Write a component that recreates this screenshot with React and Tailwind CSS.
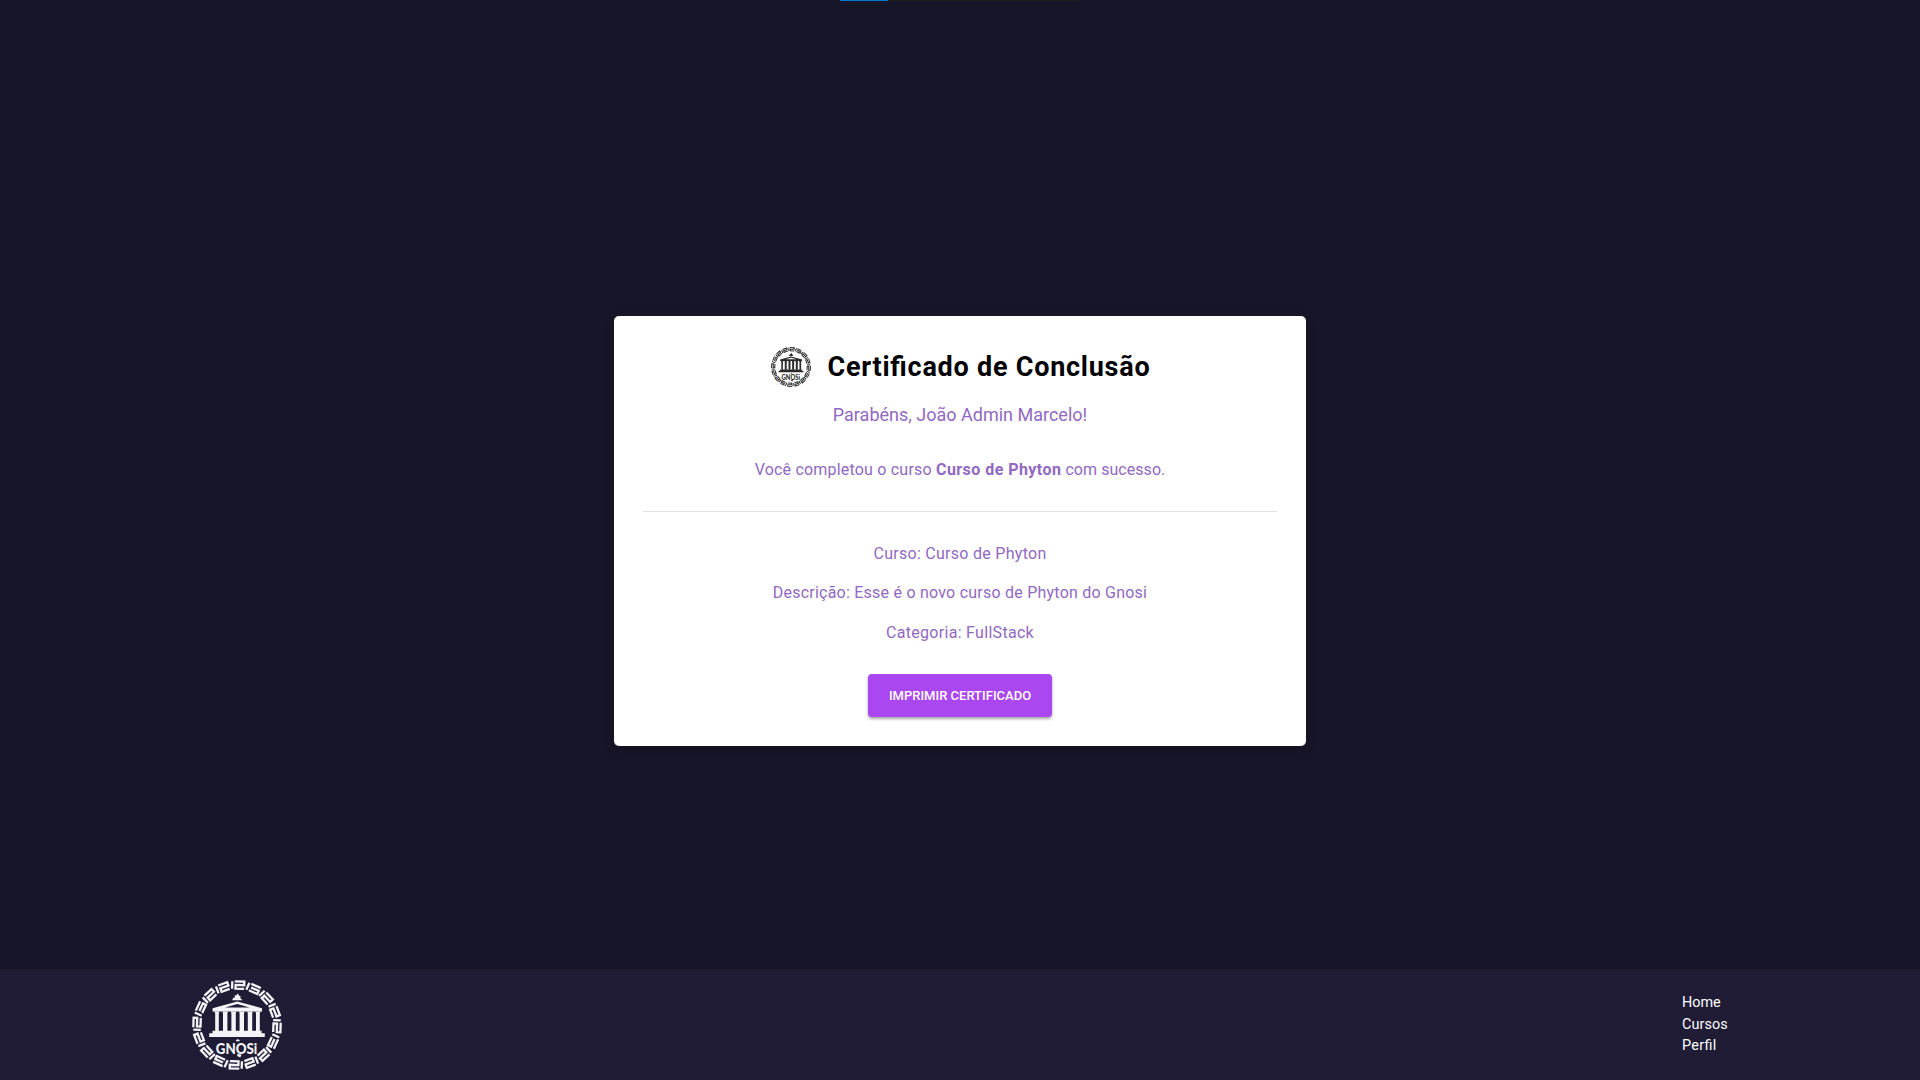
const MEANDERS = Array.from({ length: 16 }, (_, i) => i * 22.5 + 2);

function GnosiLogo({ className }) {
  return (
    <svg viewBox="0 0 90 90" className={className} role="img" aria-label="Gnosi">
      <g fill="none" stroke="currentColor" strokeWidth="2.3">
        {MEANDERS.map((angle, i) => (
          <path
            key={angle}
            transform={`rotate(${angle} 45 45)`}
            d={
              i % 4 === 1
                ? "M38.8 9V1.4M41 1.6H51.4M42.2 5H50.6V8.4H41.4"
                : "M38.8 9V1.4M41.2 1.4H50.8V5H42.2V8.6H50.8"
            }
          />
        ))}
      </g>
      <g fill="currentColor">
        <path d="M40 20.2L41.6 17.4L43.2 17.6L42.6 15L44.4 15.6L45.6 13.2L47.2 15.8L48.8 16.4L48.2 18L50.6 20.2Z" />
        <path
          fillRule="evenodd"
          d="M45.3 21.6L70 28.2V31.6H20.6V28.2ZM45.3 24L33 27.6H57.6Z"
        />
        <path d="M22.2 31.5h5.2l-.6 2v17.5h-3.6V33.5ZM30.4 31.5h5.6l-.6 2v17.5h-4.4V33.5ZM38.8 31.5h5.6l-.6 2v17.5h-4.4V33.5ZM47 31.5h5.6l-.6 2v17.5h-4.4V33.5ZM55.2 31.5h5.6l-.6 2v17.5h-4.4V33.5ZM63.4 31.5h5.2l-.8 2v17.5h-3.8V33.5Z" />
        <path d="M20.5 50.8H69.6V53.2H72.8V57H17.2V53.2H20.5Z" />
        <path d="M44 60.2L45.8 59L47.6 60.2V61.2H44ZM45.6 73.6L49.6 74.8L48.2 77.4L45.2 76Z" />
        <text
          x="23.8"
          y="73.8"
          textLength="41.5"
          lengthAdjust="spacingAndGlyphs"
          className="font-['Lato',sans-serif] text-[15.5px] font-black"
        >
          GNOSi
        </text>
      </g>
    </svg>
  );
}

export default function App() {
  return (
    <div className="flex h-screen flex-col overflow-hidden bg-[#171528] font-['Roboto',sans-serif]">
      <div className="mx-auto flex h-px w-[241px] shrink-0 bg-[#1f1f1f]">
        <div className="h-px w-12 bg-[#0078d4]" />
      </div>

      <main className="flex flex-1 justify-center pt-[315px]">
        <section className="flex h-[430px] w-[692px] flex-col items-center rounded-[5px] bg-white px-[29px] pt-[29px] text-base leading-6 text-[#9169c1] shadow-[0_4px_12px_rgba(0,0,0,0.2)]">
          <header className="flex h-[43px] items-center gap-[17px] pl-px">
            <GnosiLogo className="size-10 text-[#2b2b2b]" />
            <h1 className="text-[27px] font-bold tracking-[0.75px] text-black [font-feature-settings:'liga']">
              Certificado de Conclusão
            </h1>
          </header>
          <p className="mt-[13px] text-lg leading-[27px]">Parabéns, João Admin Marcelo!</p>
          <p className="mt-[30px] tracking-[0.2px]">
            Você completou o curso{" "}
            <strong className="font-bold tracking-[0.45px]">Curso de Phyton</strong>
            <span className="tracking-[0.05px]"> com sucesso.</span>
          </p>
          <hr className="mt-[29px] w-full border-[#e2e2e6]" />
          <p className="mt-[30px] tracking-[0.28px]">Curso: Curso de Phyton</p>
          <p className="mt-[15px] tracking-[0.23px]">
            Descrição: Esse é o novo curso de Phyton do Gnosi
          </p>
          <p className="mt-4 tracking-[0.3px]">Categoria: FullStack</p>
          <button className="mt-[29px] h-[43px] w-[184px] rounded bg-[#ab47f1] text-[13px] font-medium text-white shadow-[0_2px_3px_rgba(0,0,0,0.35)]">
            IMPRIMIR CERTIFICADO
          </button>
        </section>
      </main>

      <footer className="flex h-[111px] shrink-0 items-center justify-between bg-[#201c36] pr-[191px] pl-[192px]">
        <GnosiLogo className="size-[90px] text-[#f4f4f8]" />
        <nav className="flex w-[47px] flex-col text-[14.4px] leading-[21.6px] text-white">
          <a className="tracking-normal">Home</a>
          <a className="tracking-[0.1px]">Cursos</a>
          <a className="tracking-[0.3px] [font-feature-settings:'liga']">Perfil</a>
        </nav>
      </footer>
    </div>
  );
}
